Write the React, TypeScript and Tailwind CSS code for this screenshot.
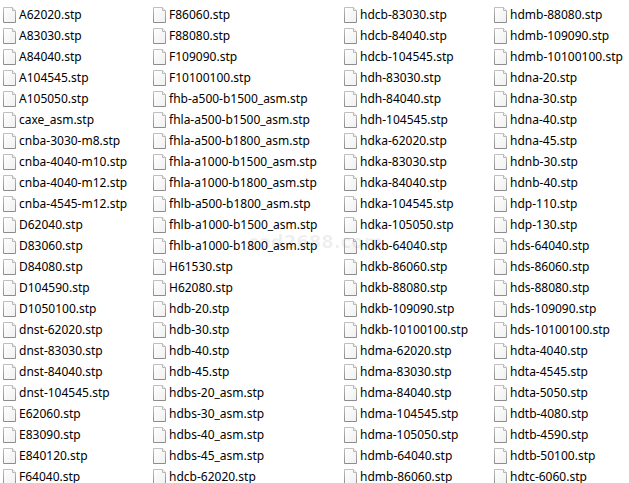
const columns = [
  [
    "A62020.stp", "A83030.stp", "A84040.stp", "A104545.stp", "A105050.stp",
    "caxe_asm.stp", "cnba-3030-m8.stp", "cnba-4040-m10.stp",
    "cnba-4040-m12.stp", "cnba-4545-m12.stp", "D62040.stp", "D83060.stp",
    "D84080.stp", "D104590.stp", "D1050100.stp", "dnst-62020.stp",
    "dnst-83030.stp", "dnst-84040.stp", "dnst-104545.stp", "E62060.stp",
    "E83090.stp", "E840120.stp", "F64040.stp",
  ],
  [
    "F86060.stp", "F88080.stp", "F109090.stp", "F10100100.stp",
    "fhb-a500-b1500_asm.stp", "fhla-a500-b1500_asm.stp",
    "fhla-a500-b1800_asm.stp", "fhla-a1000-b1500_asm.stp",
    "fhla-a1000-b1800_asm.stp", "fhlb-a500-b1800_asm.stp",
    "fhlb-a1000-b1500_asm.stp", "fhlb-a1000-b1800_asm.stp", "H61530.stp",
    "H62080.stp", "hdb-20.stp", "hdb-30.stp", "hdb-40.stp", "hdb-45.stp",
    "hdbs-20_asm.stp", "hdbs-30_asm.stp", "hdbs-40_asm.stp",
    "hdbs-45_asm.stp", "hdcb-62020.stp",
  ],
  [
    "hdcb-83030.stp", "hdcb-84040.stp", "hdcb-104545.stp", "hdh-83030.stp",
    "hdh-84040.stp", "hdh-104545.stp", "hdka-62020.stp", "hdka-83030.stp",
    "hdka-84040.stp", "hdka-104545.stp", "hdka-105050.stp", "hdkb-64040.stp",
    "hdkb-86060.stp", "hdkb-88080.stp", "hdkb-109090.stp",
    "hdkb-10100100.stp", "hdma-62020.stp", "hdma-83030.stp",
    "hdma-84040.stp", "hdma-104545.stp", "hdma-105050.stp",
    "hdmb-64040.stp", "hdmb-86060.stp",
  ],
  [
    "hdmb-88080.stp", "hdmb-109090.stp", "hdmb-10100100.stp", "hdna-20.stp",
    "hdna-30.stp", "hdna-40.stp", "hdna-45.stp", "hdnb-30.stp",
    "hdnb-40.stp", "hdp-110.stp", "hdp-130.stp", "hds-64040.stp",
    "hds-86060.stp", "hds-88080.stp", "hds-109090.stp", "hds-10100100.stp",
    "hdta-4040.stp", "hdta-4545.stp", "hdta-5050.stp", "hdtb-4080.stp",
    "hdtb-4590.stp", "hdtb-50100.stp", "hdtc-6060.stp",
  ],
];

const FileIcon = () => (
  <svg viewBox="0 0 13 16" className="h-4 w-[13px] shrink-0" aria-hidden="true">
    <defs>
      <linearGradient id="paper" x1="0" y1="0" x2="1" y2="1">
        <stop offset="0" stopColor="#ffffff" />
        <stop offset="1" stopColor="#f0f0f0" />
      </linearGradient>
      <linearGradient id="edge" x1="0" y1="0" x2="0" y2="1">
        <stop offset="0" stopColor="#c0c0c0" />
        <stop offset="1" stopColor="#8c8c8c" />
      </linearGradient>
    </defs>
    <path
      d="M.5 .5H9.5L12.5 3.5V15.5H.5Z"
      fill="url(#paper)"
      stroke="url(#edge)"
    />
    <path d="M9.5 .5V3.5H12.5" fill="#f4f4f4" stroke="#b8b8b8" />
  </svg>
);

const App = () => {
  return (
    <main className="relative h-screen overflow-hidden bg-white font-['Noto_Sans','Open_Sans',sans-serif] text-[12px] text-black">
      <div className="grid grid-cols-[150fr_191fr_150fr_135fr] pt-1 pl-[3px]">
        {columns.map((files) => (
          <ul key={files[0]}>
            {files.map((name) => (
              <li key={name} className="flex h-[21px] items-center gap-[3px]">
                <FileIcon />
                <span className="whitespace-nowrap">{name}</span>
              </li>
            ))}
          </ul>
        ))}
      </div>
      {/* watermark */}
      <span className="pointer-events-none absolute top-[228px] left-[248px] font-['DejaVu_Sans',Verdana,sans-serif] text-[18px] leading-7 font-bold text-black/7">
        cad2688.com
      </span>
    </main>
  );
};

export default App;
